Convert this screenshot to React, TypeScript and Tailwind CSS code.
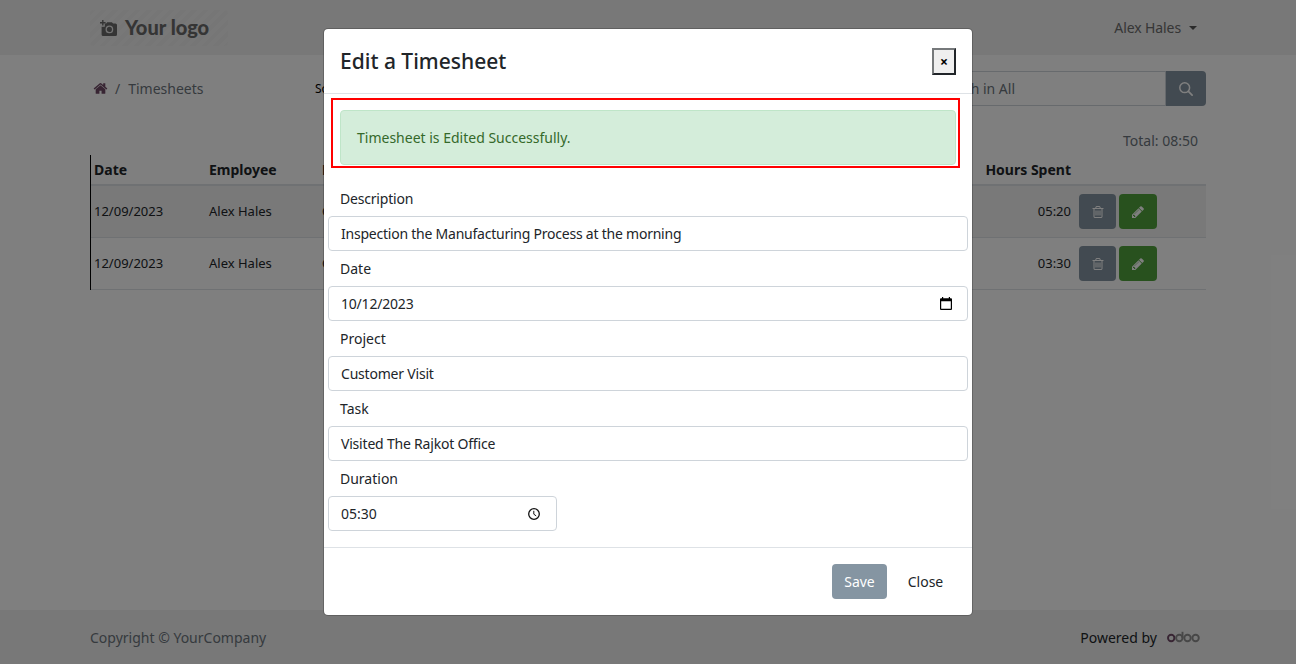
import React from "react";

type IconProps = { className?: string };

const TrashIcon = ({ className }: IconProps) => (
  <svg viewBox="0 0 1792 1792" fill="currentColor" className={className}>
    <path d="M704 736v576q0 14-9 23t-23 9h-64q-14 0-23-9t-9-23v-576q0-14 9-23t23-9h64q14 0 23 9t9 23zm256 0v576q0 14-9 23t-23 9h-64q-14 0-23-9t-9-23v-576q0-14 9-23t23-9h64q14 0 23 9t9 23zm256 0v576q0 14-9 23t-23 9h-64q-14 0-23-9t-9-23v-576q0-14 9-23t23-9h64q14 0 23 9t9 23zm128 724v-948h-896v948q0 22 7 40.5t14.5 27 10.5 8.5h832q3 0 10.5-8.5t14.5-27 7-40.5zm-672-1076h448l-48-117q-7-9-17-11h-317q-10 2-17 11zm928 32v64q0 14-9 23t-23 9h-96v948q0 83-47 143.5t-113 60.5h-832q-66 0-113-58.5t-47-141.5v-952h-96q-14 0-23-9t-9-23v-64q0-14 9-23t23-9h309l70-167q15-37 54-63t79-26h320q40 0 79 26t54 63l70 167h309q14 0 23 9t9 23z" />
  </svg>
);

const PencilIcon = ({ className }: IconProps) => (
  <svg viewBox="0 0 1792 1792" fill="currentColor" className={className}>
    <path d="M491 1536l91-91-235-235-91 91v107h128v128h107zm523-928q0-22-22-22-10 0-17 7l-542 542q-7 7-7 17 0 22 22 22 10 0 17-7l542-542q7-7 7-17zm-54-192l416 416-832 832h-416v-416zm683 96q0 53-37 90l-166 166-416-416 166-165q36-38 90-38 53 0 91 38l235 234q37 39 37 91z" />
  </svg>
);

const HomeIcon = ({ className }: IconProps) => (
  <svg viewBox="0 0 1792 1792" fill="currentColor" className={className}>
    <path d="M1472 992v480q0 26-19 45t-45 19h-384v-384h-256v384h-384q-26 0-45-19t-19-45v-480q0-1 .5-3t.5-3l575-474 575 474q1 2 1 6zm223-69l-62 74q-8 9-21 11h-3q-13 0-21-7l-692-577-692 577q-12 8-24 7-13-2-21-11l-62-74q-8-10-7-23.5t11-21.5l719-599q32-26 76-26t76 26l244 204v-195q0-14 9-23t23-9h192q14 0 23 9t9 23v408l219 182q10 8 11 21.5t-7 23.5z" />
  </svg>
);

const SearchIcon = ({ className }: IconProps) => (
  <svg viewBox="0 0 14 14" fill="none" stroke="currentColor" strokeLinecap="round" className={className}>
    <circle cx="5.7" cy="5.7" r="4.9" strokeWidth="1.5" />
    <path d="M9.4 9.4l3.7 3.7" strokeWidth="1.7" />
  </svg>
);

const CameraIcon = ({ className }: IconProps) => (
  <svg viewBox="0 0 17 16" className={className}>
    <path
      fill="currentColor"
      d="M6.2 3.4l1-1.2h4.6l1.3 1.4h2.4q1.5 0 1.5 1.5v9.3q0 1.5-1.5 1.5h-12.4q-1.5 0-1.5-1.5v-7.6h3.2v-3.4z"
    />
    <path stroke="currentColor" strokeWidth="1.4" d="M2.8 0v5.6M0 2.8h5.6" />
    <circle cx="9.4" cy="9.4" r="3.2" fill="none" stroke="#e8e8e8" strokeWidth="1.3" />
  </svg>
);

const CalendarIcon = ({ className }: IconProps) => (
  <svg viewBox="0 0 12 13" className={className}>
    <path fill="#000" d="M2 0h1.2v1.2h5.6V0H10v1.2h1q1 0 1 1V12q0 1-1 1H1q-1 0-1-1V2.2q0-1 1-1h1zM1.2 4.2v7.6h9.6V4.2z" />
  </svg>
);

const ClockIcon = ({ className }: IconProps) => (
  <svg viewBox="0 0 12 12" fill="none" stroke="#111" className={className}>
    <circle cx="6" cy="6" r="5.3" strokeWidth="1.3" />
    <path d="M5.8 2.8V6.2L8.2 7.9" strokeWidth="1" />
  </svg>
);

const OdooLogo = ({ className }: IconProps) => (
  <svg viewBox="0 0 33 12" fill="none" strokeWidth="1.9" className={className}>
    <circle cx="4.2" cy="7" r="3.2" stroke="#714b67" />
    <g stroke="#8f8f8f">
      <circle cx="12.3" cy="7" r="3.2" />
      <path d="M15.5 7V.8" />
      <circle cx="20.5" cy="7" r="3.2" />
      <circle cx="28.6" cy="7" r="3.2" />
    </g>
  </svg>
);

const rows = [
  { date: "12/09/2023", employee: "Alex Hales", project: "Customer Visit", hours: "05:20", shade: "bg-[#f2f2f2]" },
  { date: "12/09/2023", employee: "Alex Hales", project: "Customer Visit", hours: "03:30", shade: "bg-white" },
];

const fields = [
  { label: "Description", value: "Inspection the Manufacturing Process at the morning", track: "tracking-[-0.23px]", labelTrack: "tracking-[-0.2px]" },
  { label: "Date", value: "10/12/2023", icon: "date", track: "tracking-[-0.2px]", labelTrack: "" },
  { label: "Project", value: "Customer Visit", track: "tracking-[-0.2px]", labelTrack: "" },
  { label: "Task", value: "Visited The Rajkot Office", track: "tracking-[-0.2px]", labelTrack: "" },
  { label: "Duration", value: "05:30", icon: "time", track: "", labelTrack: "" },
];

function Page() {
  return (
    <div className="flex h-[664px] flex-col bg-white">
      <header className="h-[55px] bg-[#f0f0f0]">
        <div className="mx-auto flex h-full w-[1116px] items-center justify-between">
          <div className="flex h-9 w-[138px] items-center rounded bg-[repeating-linear-gradient(135deg,#ededed_0_4px,#f1f1f1_4px_8px)] pl-2.5">
            <CameraIcon className="h-4 w-[17px] text-[#6a6a6a]" />
            <span className="ml-2 font-['Lato'] text-[20px] font-black text-[#6a6a6a]">Your logo</span>
          </div>
          <div className="flex items-center gap-2 pr-[9px] text-[#6c6c6c]">
            <span className="tracking-[-0.1px]">Alex Hales</span>
            <span className="border-x-4 border-t-4 border-x-transparent border-t-[#555]" />
          </div>
        </div>
      </header>

      <main className="mx-auto w-[1116px] flex-1 pt-4">
        <div className="flex h-[35px] items-center">
          <div className="flex w-[225px] items-center text-[#6c757d]">
            <HomeIcon className="ml-[3px] size-[15px] text-[#714b67]" />
            <span className="ml-[7px]">/</span>
            <span className="ml-2">Timesheets</span>
          </div>
          <span className="text-[12px] text-black">Sort By: Newest</span>
          <div className="ml-auto flex h-[35px] w-[340px]">
            <div className="flex flex-1 items-center border border-[#ced4da] pl-[58px] text-[#6c757d]">
              <span className="ml-auto mr-[150px]">Search in All</span>
            </div>
            <div className="flex w-10 items-center justify-center rounded-r bg-[#8595a2]">
              <SearchIcon className="size-[14px] text-white" />
            </div>
          </div>
        </div>

        <div className="flex h-[49px] items-center justify-end pr-2 pt-5 text-[#6c757d]">Total: 08:50</div>

        <div className="border-l border-black text-[13px] text-[#212529]">
          <div className="flex h-[31px] items-center border-b-2 border-[#dee2e6] text-[14px] font-bold">
            <span className="w-[115px] pl-[3px]">Date</span>
            <span className="w-[113px] pl-[3px]">Employee</span>
            <span className="w-[200px] pl-[3px]">Project</span>
            <span className="ml-auto pr-[135px]">Hours Spent</span>
          </div>
          {rows.map((row) => (
            <div key={row.hours} className={`flex h-[52px] items-center border-b border-[#dee2e6] ${row.shade}`}>
              <span className="w-[115px] pl-[3px]">{row.date}</span>
              <span className="w-[113px] pl-[3px]">{row.employee}</span>
              <span className="w-[200px] pl-[3px]">{row.project}</span>
              <span className="ml-auto pr-2">{row.hours}</span>
              <span className="flex h-[35px] w-[37px] items-center justify-center rounded bg-[#8595a2] text-white">
                <TrashIcon className="size-[14px]" />
              </span>
              <span className="ml-[3px] mr-[49px] flex h-[35px] w-[38px] items-center justify-center rounded bg-[#51a33d] text-white">
                <PencilIcon className="size-[14px]" />
              </span>
            </div>
          ))}
        </div>
      </main>

      <footer className="h-[54px] bg-[#f0f0f0]">
        <div className="mx-auto flex h-full w-[1116px] items-center">
          <span className="text-[#6c757d]">Copyright © YourCompany</span>
          <span className="ml-auto text-[#212529]">Powered by</span>
          <OdooLogo className="ml-[10px] mr-[6px] h-3 w-[33px]" />
        </div>
      </footer>
    </div>
  );
}

function Modal() {
  return (
    <div className="relative mx-auto mt-7 w-[650px] overflow-hidden rounded-[5px] border border-black/20 bg-white bg-clip-padding text-[#212529]">
      <div className="flex h-[65px] items-center justify-between border-b border-[#dee2e6] px-4">
        <h5 className="text-[21px] font-medium">Edit a Timesheet</h5>
        <button className="flex h-[27px] w-6 items-center justify-center border-2 border-b-[#212529] border-l-[#76797b] border-r-[#212529] border-t-[#76797b] bg-[#efefef] text-[14px] font-bold text-black">
          ×
        </button>
      </div>

      <div className="absolute left-[7px] top-[69px] h-[70px] w-[629px] border-2 border-[#f00]" />

      <div className="h-[454px] border-b border-[#dee2e6] pt-4">
        <div className="mx-4 mb-4 flex h-[55px] items-center rounded border border-[#bfe5c8] bg-[#d4edda] px-4 text-[#35692a]">
          <span>Timesheet is Edited Successfully.</span>
        </div>
        {fields.map((field) => (
          <div key={field.label} className="px-1">
            <div className={`flex h-[35px] items-center pl-3 ${field.labelTrack}`}>{field.label}</div>
            <div
              className={`flex h-[35px] items-center justify-between rounded border border-[#ced4da] pl-3 ${
                field.icon === "time" ? "w-[229px] pr-4" : "pr-[15px]"
              }`}
            >
              <span className={field.track}>{field.value}</span>
              {field.icon === "date" && <CalendarIcon className="h-[13px] w-3" />}
              {field.icon === "time" && <ClockIcon className="size-3" />}
            </div>
          </div>
        ))}
      </div>

      <div className="flex h-[67px] items-center justify-end pr-4">
        <button className="h-[35px] w-[55px] rounded bg-[#8595a2] text-white">Save</button>
        <button className="ml-2 h-[35px] w-[61px]">Close</button>
      </div>
    </div>
  );
}

export default function App() {
  return (
    <div className="relative h-[664px] w-[1296px] overflow-hidden whitespace-nowrap font-['Noto_Sans','Open_Sans',sans-serif] text-[14px] leading-[21px]">
      <Page />
      <div className="absolute inset-0 bg-black/50">
        <Modal />
      </div>
    </div>
  );
}
